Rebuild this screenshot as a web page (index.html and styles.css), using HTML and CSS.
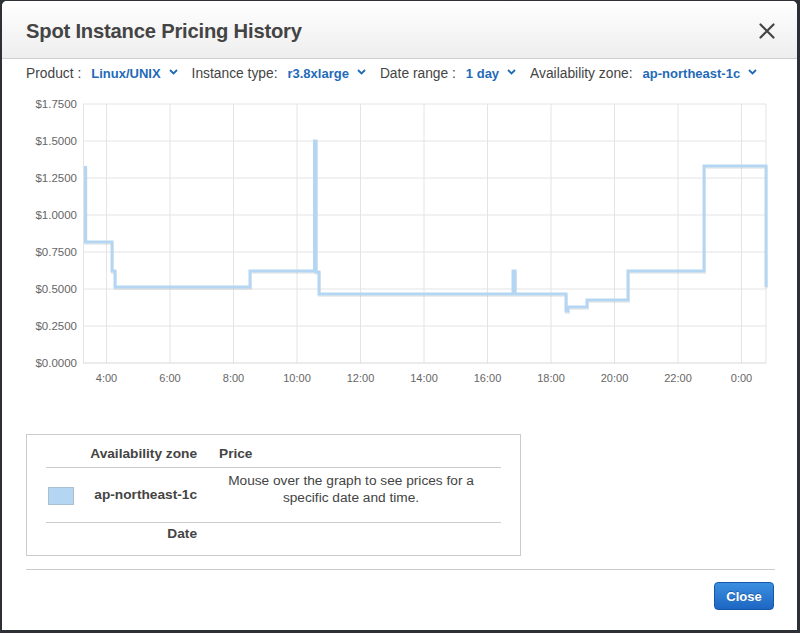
FILE: index.html
```html
<!DOCTYPE html>
<html>
<head>
<meta charset="utf-8">
<link rel="stylesheet" href="styles.css">
</head>
<body>
<div class="modal">
  <div class="header">
    <h1 class="title">Spot Instance Pricing History</h1>
    <svg class="close-x" width="16" height="16" viewBox="0 0 16 16"><path d="M1.5 1.5L14.5 14.5M14.5 1.5L1.5 14.5" stroke="#444" stroke-width="2.2" stroke-linecap="round"/></svg>
  </div>
  <div class="body">
    <div class="toolbar">
      <span class="lbl">Product :</span>
      <span class="sel">Linux/UNIX<svg class="chev" width="9" height="6" viewBox="0 0 9 6"><path d="M1 1L4.5 4.5L8 1" fill="none" stroke="#1f6bb8" stroke-width="1.8"/></svg></span>
      <span class="lbl">Instance type:</span>
      <span class="sel">r3.8xlarge<svg class="chev" width="9" height="6" viewBox="0 0 9 6"><path d="M1 1L4.5 4.5L8 1" fill="none" stroke="#1f6bb8" stroke-width="1.8"/></svg></span>
      <span class="lbl">Date range :</span>
      <span class="sel">1 day<svg class="chev" width="9" height="6" viewBox="0 0 9 6"><path d="M1 1L4.5 4.5L8 1" fill="none" stroke="#1f6bb8" stroke-width="1.8"/></svg></span>
      <span class="lbl">Availability zone:</span>
      <span class="sel">ap-northeast-1c<svg class="chev" width="9" height="6" viewBox="0 0 9 6"><path d="M1 1L4.5 4.5L8 1" fill="none" stroke="#1f6bb8" stroke-width="1.8"/></svg></span>
    </div>
    <svg class="chart" width="749" height="305" viewBox="0 0 749 305">
      <g transform="translate(-26,-88)">
        <g class="grid">
          <line x1="83" y1="104" x2="766" y2="104"/>
          <line x1="83" y1="141" x2="766" y2="141"/>
          <line x1="83" y1="178" x2="766" y2="178"/>
          <line x1="83" y1="215" x2="766" y2="215"/>
          <line x1="83" y1="252" x2="766" y2="252"/>
          <line x1="83" y1="289" x2="766" y2="289"/>
          <line x1="83" y1="326" x2="766" y2="326"/>
          <line x1="83.5" y1="104" x2="83.5" y2="363"/>
          <line x1="766" y1="104" x2="766" y2="363"/>
          <line x1="106.5" y1="104" x2="106.5" y2="363"/>
          <line x1="170" y1="104" x2="170" y2="363"/>
          <line x1="233.5" y1="104" x2="233.5" y2="363"/>
          <line x1="297" y1="104" x2="297" y2="363"/>
          <line x1="360.5" y1="104" x2="360.5" y2="363"/>
          <line x1="424" y1="104" x2="424" y2="363"/>
          <line x1="487.5" y1="104" x2="487.5" y2="363"/>
          <line x1="551" y1="104" x2="551" y2="363"/>
          <line x1="614.5" y1="104" x2="614.5" y2="363"/>
          <line x1="678" y1="104" x2="678" y2="363"/>
          <line x1="741.5" y1="104" x2="741.5" y2="363"/>
        </g>
        <line class="axis" x1="83" y1="363" x2="766" y2="363"/>
        <g class="ylab">
          <text x="77" y="108">$1.7500</text>
          <text x="77" y="145">$1.5000</text>
          <text x="77" y="182">$1.2500</text>
          <text x="77" y="219">$1.0000</text>
          <text x="77" y="256">$0.7500</text>
          <text x="77" y="293">$0.5000</text>
          <text x="77" y="330">$0.2500</text>
          <text x="77" y="367">$0.0000</text>
        </g>
        <g class="xlab">
          <text x="106.5" y="382">4:00</text>
          <text x="170" y="382">6:00</text>
          <text x="233.5" y="382">8:00</text>
          <text x="297" y="382">10:00</text>
          <text x="360.5" y="382">12:00</text>
          <text x="424" y="382">14:00</text>
          <text x="487.5" y="382">16:00</text>
          <text x="551" y="382">18:00</text>
          <text x="614.5" y="382">20:00</text>
          <text x="678" y="382">22:00</text>
          <text x="741.5" y="382">0:00</text>
        </g>
        <path class="series-shadow" d="M85.5,166 V242 H112 V271 H115 V287 H250 V271 H314.5 V141 H316 V272 H319 V294 H513 V271 H515 V294 H566 V311 H568 V307 H587 V300 H628 V271 H704 V166 H766 V287"/>
        <path class="series" d="M85.5,166 V242 H112 V271 H115 V287 H250 V271 H314.5 V141 H316 V272 H319 V294 H513 V271 H515 V294 H566 V311 H568 V307 H587 V300 H628 V271 H704 V166 H766 V287"/>
      </g>
    </svg>
    <div class="legend">
      <div class="lrow head">
        <div class="c1"></div>
        <div class="c2">Availability zone</div>
        <div class="c3 left">Price</div>
      </div>
      <div class="lrow mid">
        <div class="c1"><span class="swatch"></span></div>
        <div class="c2">ap-northeast-1c</div>
        <div class="c3 msg">Mouse over the graph to see prices for a specific date and time.</div>
      </div>
      <div class="lrow foot">
        <div class="c1"></div>
        <div class="c2">Date</div>
        <div class="c3"></div>
      </div>
    </div>
    <div class="footer">
      <button class="btn">Close</button>
    </div>
  </div>
</div>
</body>
</html>
```
FILE: styles.css
```css
html, body {
  margin: 0;
  padding: 0;
}
body {
  background: #2d3136;
  width: 800px;
  height: 633px;
  overflow: hidden;
  font-family: "Liberation Sans", Arial, Helvetica, sans-serif;
  color: #444;
}
.modal {
  margin: 1px 3px 0 2px;
  height: 629px;
  background: #fff;
  border-radius: 5px 5px 0 0;
  overflow: hidden;
}
.header {
  border-bottom: 1px solid #cfcfcf;
  background: linear-gradient(#ffffff, #eeeeee);
  display: flex;
  align-items: center;
  padding: 4px 24px 0 24px;
  box-sizing: border-box;
  height: 58px;
  justify-content: space-between;
}
.title {
  margin: 0;
  font-size: 20.2px;
  font-weight: bold;
  letter-spacing: -0.2px;
  color: #444;
}
.close-x {
  margin-right: -2px;
  margin-top: -1px;
}
.body {
  padding: 0 22px 0 24px;
}
.toolbar {
  height: 29px;
  display: flex;
  align-items: center;
  padding-bottom: 1px;
  box-sizing: border-box;
  white-space: nowrap;
}
.lbl {
  color: #444;
  font-size: 13.8px;
  margin-right: 10px;
}
.sel {
  color: #1f6bb8;
  font-weight: bold;
  font-size: 13px;
  margin-right: 14px;
  display: inline-flex;
  align-items: center;
}
.chev {
  margin-left: 8px;
  margin-top: -2px;
}
.chart {
  display: block;
  margin-top: 0;
}
.grid line {
  stroke: #e4e4e4;
  stroke-width: 1;
}
.axis {
  stroke: #d8d8d8;
  stroke-width: 1;
}
.ylab text {
  font-family: "Liberation Sans", Arial, sans-serif;
  font-size: 11.5px;
  fill: #666;
  text-anchor: end;
}
.xlab text {
  font-family: "Liberation Sans", Arial, sans-serif;
  font-size: 11px;
  fill: #666;
  text-anchor: middle;
}
.series {
  fill: none;
  stroke: #b4d6f3;
  stroke-width: 3;
  stroke-linejoin: miter;
}
.series-shadow {
  fill: none;
  stroke: rgba(0, 0, 0, 0.07);
  stroke-width: 3;
  transform: translate(0.5px, 1.5px);
}
.legend {
  margin-top: 41px;
  width: 495px;
  box-sizing: border-box;
  border: 1px solid #cccccc;
  padding: 0 19px;
  font-size: 13.7px;
}
.lrow {
  display: grid;
  grid-template-columns: 37px 114px 304px;
}
.lrow.head {
  height: 33px;
  align-items: end;
  padding-bottom: 5px;
  box-sizing: border-box;
  border-bottom: 1px solid #cccccc;
  font-weight: bold;
}
.lrow.mid {
  height: 55px;
  box-sizing: border-box;
  border-bottom: 1px solid #cccccc;
  align-items: center;
}
.lrow.foot {
  height: 32px;
  padding-top: 3px;
  box-sizing: border-box;
  font-weight: bold;
}
.c2 {
  text-align: right;
  line-height: 16px;
  white-space: nowrap;
}
.lrow.mid .c2 {
  font-weight: bold;
}
.c3.left {
  padding-left: 22px;
  line-height: 16px;
}
.c3.msg {
  align-self: start;
  padding: 4px 14px 0 18px;
  text-align: center;
  line-height: 17px;
}
.swatch {
  display: block;
  width: 24px;
  height: 16px;
  margin-left: 2px;
  margin-top: 1px;
  background: #b4d6f3;
  border: 1px solid #a9bfd2;
}
.footer {
  margin-top: 13px;
  border-top: 1px solid #cccccc;
  display: flex;
  justify-content: flex-end;
  padding-top: 12px;
}
.btn {
  height: 28px;
  width: 60px;
  margin-right: 1px;
  border: 1px solid #1757a9;
  border-radius: 4px;
  background: linear-gradient(#3b8fe0, #1d66c2);
  color: #fff;
  font-family: "Liberation Sans", Arial, sans-serif;
  font-size: 13px;
  font-weight: bold;
  padding: 0;
  text-shadow: 0 -1px 0 rgba(0,0,0,0.25);
}
```
